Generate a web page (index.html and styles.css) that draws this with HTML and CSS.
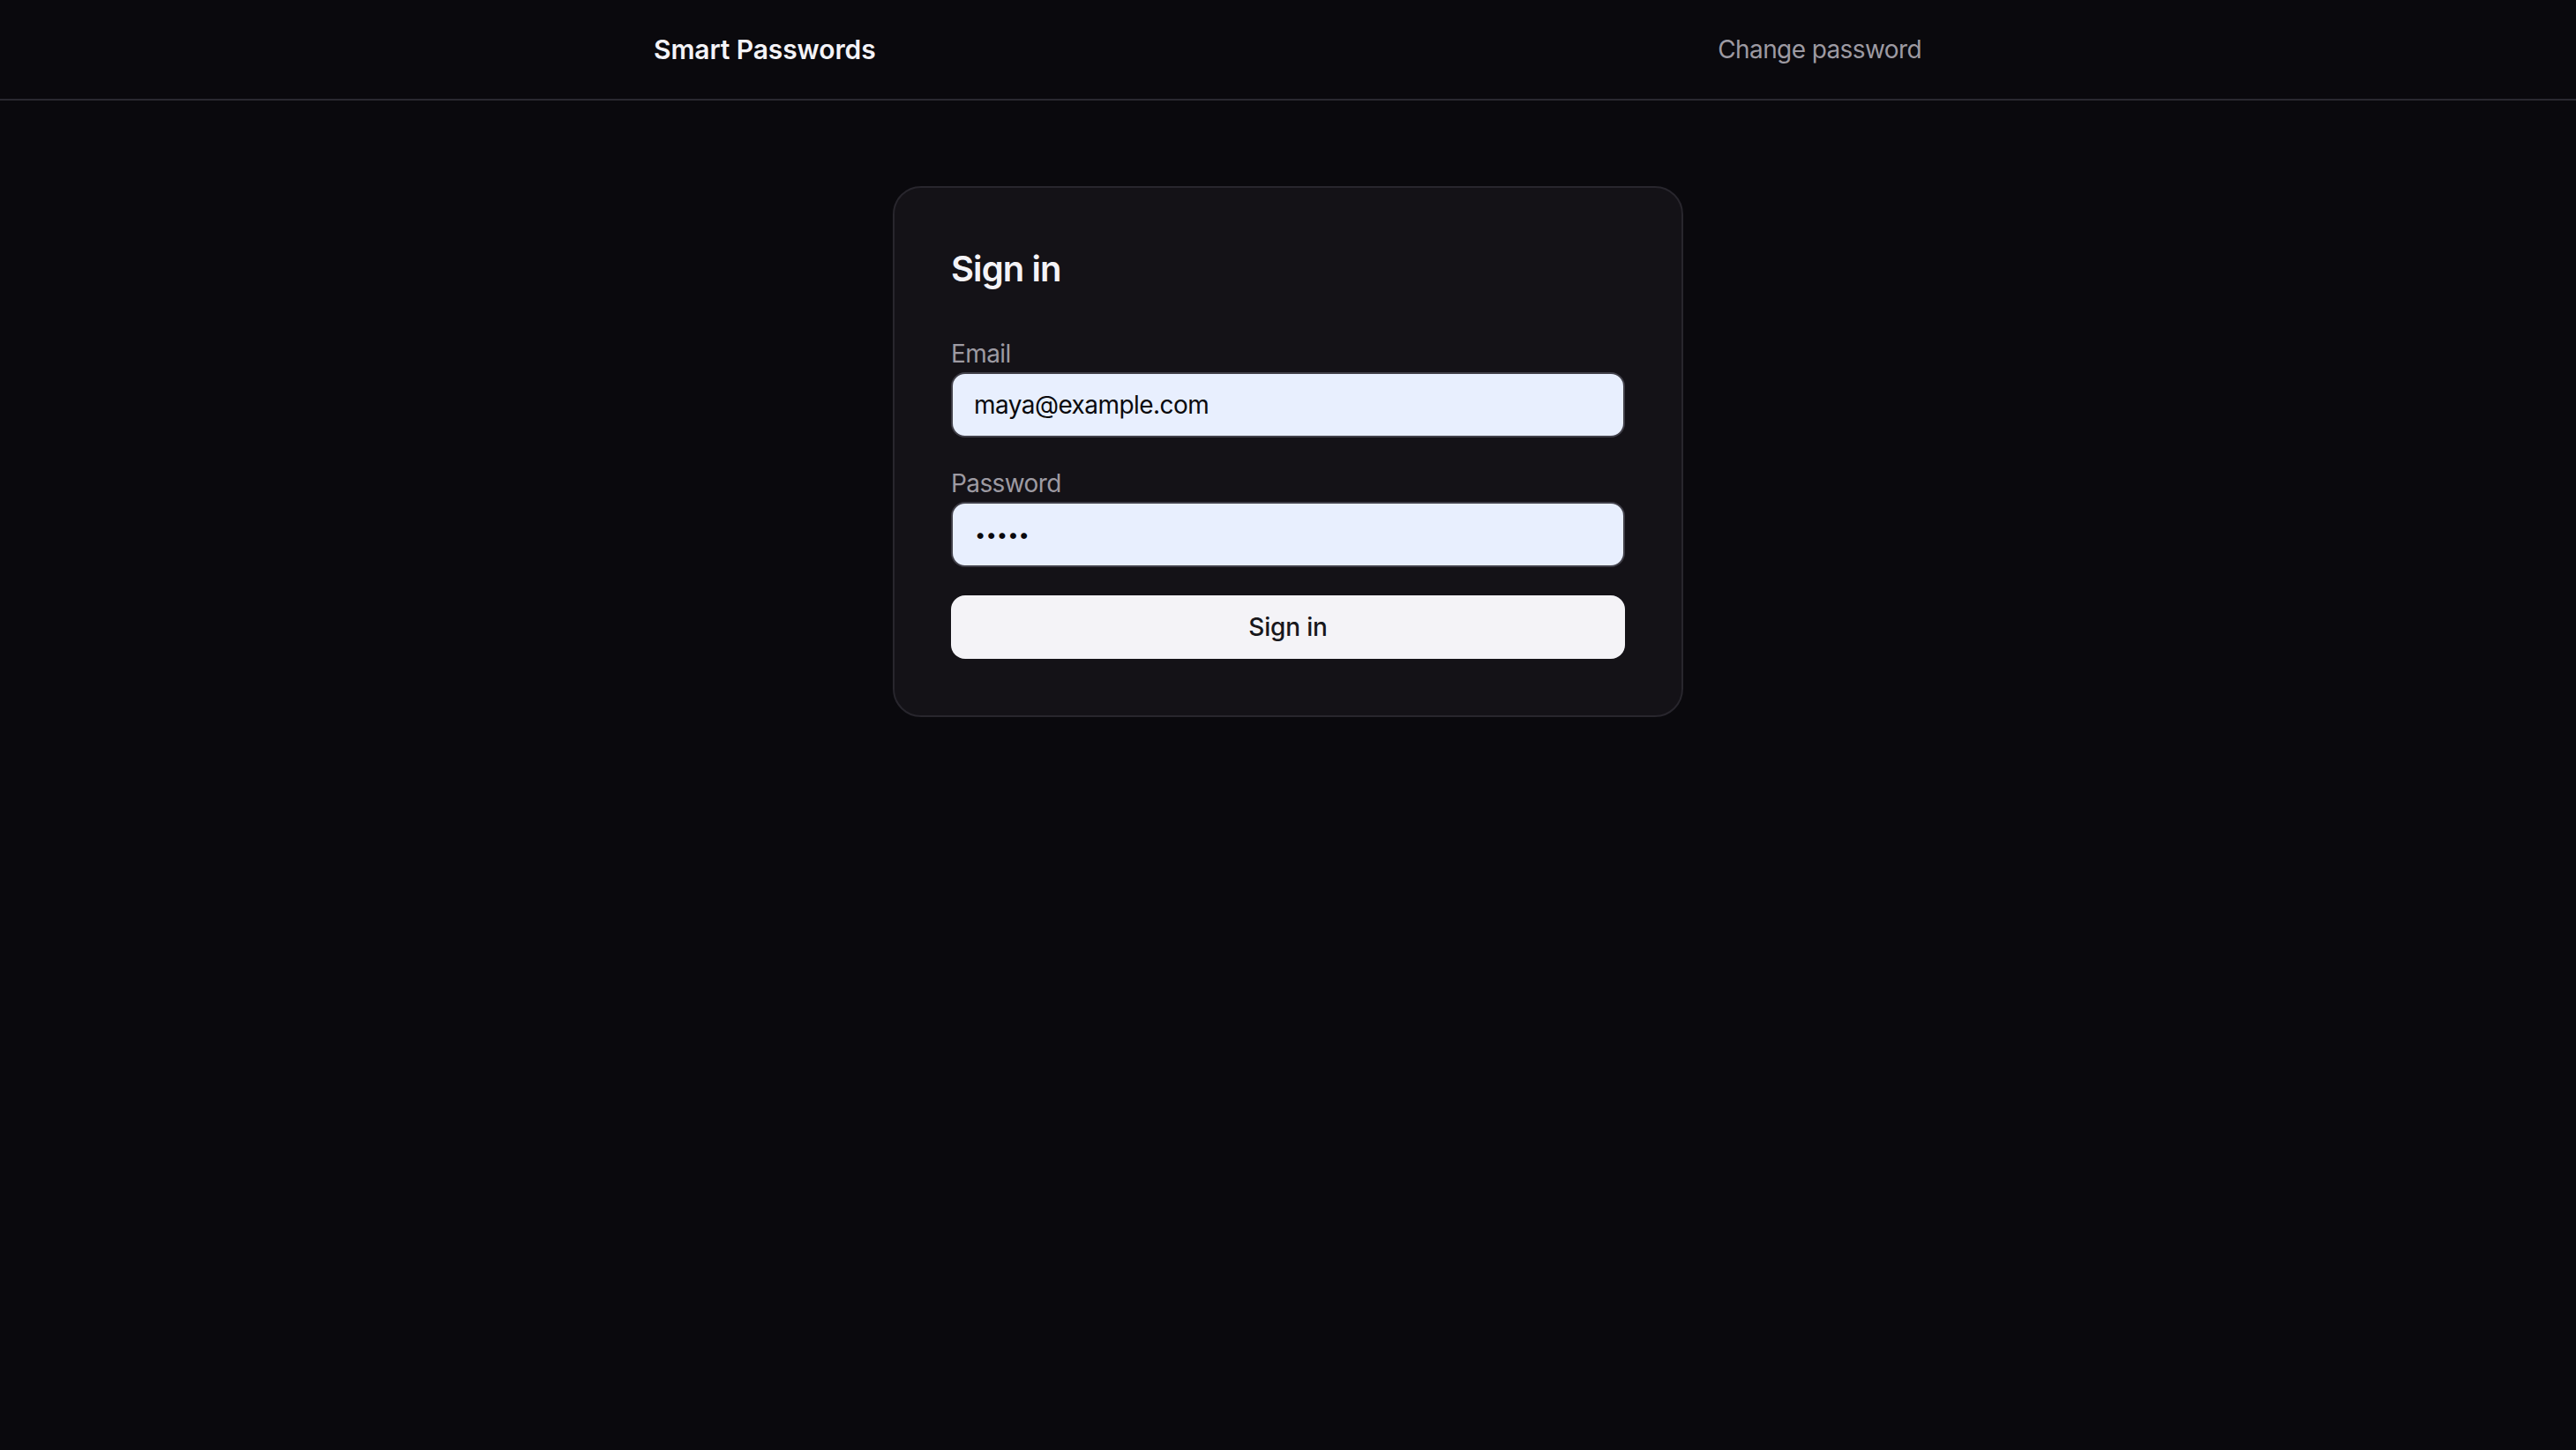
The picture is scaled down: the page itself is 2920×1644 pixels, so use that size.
FILE: index.html
```html
<!DOCTYPE html>
<html lang="en">
<head>
<meta charset="utf-8">
<title>Smart Passwords — Sign in</title>
<link rel="stylesheet" href="styles.css">
</head>
<body>
<header class="topbar">
  <div class="topbar-inner">
    <a class="brand" href="#">Smart Passwords</a>
    <a class="nav-link" href="#">Change password</a>
  </div>
</header>
<main class="main">
  <section class="card">
    <h1 class="card-title">Sign in</h1>
    <form class="form">
      <div class="field">
        <label class="label" for="email">Email</label>
        <input class="input" id="email" type="email" value="maya@example.com">
      </div>
      <div class="field">
        <label class="label" for="password">Password</label>
        <input class="input input-password" id="password" type="password" value="12345">
      </div>
      <button class="button" type="button">Sign in</button>
    </form>
  </section>
</main>
</body>
</html>
```

FILE: styles.css
```css
* { box-sizing: border-box; }
html, body {
  margin: 0;
  padding: 0;
  background: #0a090d;
  color: #f4f3f7;
  font-family: Inter, "Noto Sans", "Liberation Sans", sans-serif;
  min-height: 100%;
}
body { min-height: 1644px; }
a { text-decoration: none; }

.topbar {
  height: 114px;
  border-bottom: 2px solid #2a2930;
}
.topbar-inner {
  max-width: 1440px;
  height: 112px;
  margin: 0 auto;
  display: flex;
  align-items: center;
  justify-content: space-between;
  padding: 0 2px 0 1px;
}
.brand {
  color: #f4f3f7;
  font-size: 30px;
  font-weight: 600;
  letter-spacing: -0.1px;
}
.nav-link {
  color: #9d9aa2;
  font-size: 28px;
  font-weight: 400;
  letter-spacing: -0.6px;
}

.main {
  display: flex;
  justify-content: center;
  padding-top: 97px;
}
.card {
  width: 896px;
  background: #141217;
  border: 2px solid #28262d;
  border-radius: 32px;
  padding: 64px 64px 64px;
}
.card-title {
  margin: 0;
  font-size: 40px;
  line-height: 56px;
  font-weight: 600;
  color: #f4f3f7;
  letter-spacing: -0.9px;
}
.form {
  margin-top: 48px;
  display: flex;
  flex-direction: column;
  gap: 32px;
}
.field {
  display: flex;
  flex-direction: column;
}
.label {
  font-size: 28px;
  line-height: 40px;
  margin-bottom: 1px;
  color: #9d9aa2;
  letter-spacing: -0.6px;
}
.input {
  height: 74px;
  width: 100%;
  border: 2px solid #403f48;
  border-radius: 16px;
  background: #e8effe;
  color: #0a090d;
  padding: 0 24px;
  font-family: Inter, "Noto Sans", "Liberation Sans", sans-serif;
  font-size: 28px;
  letter-spacing: -0.55px;
  outline: none;
}
.input-password {
  font-size: 22px;
  letter-spacing: 0;
  padding-left: 25px;
}
.button {
  height: 72px;
  width: 100%;
  border: none;
  border-radius: 16px;
  background: #f4f3f7;
  color: #18171c;
  font-family: Inter, "Noto Sans", "Liberation Sans", sans-serif;
  font-size: 28px;
  font-weight: 500;
  letter-spacing: -0.2px;
  cursor: pointer;
}
```
